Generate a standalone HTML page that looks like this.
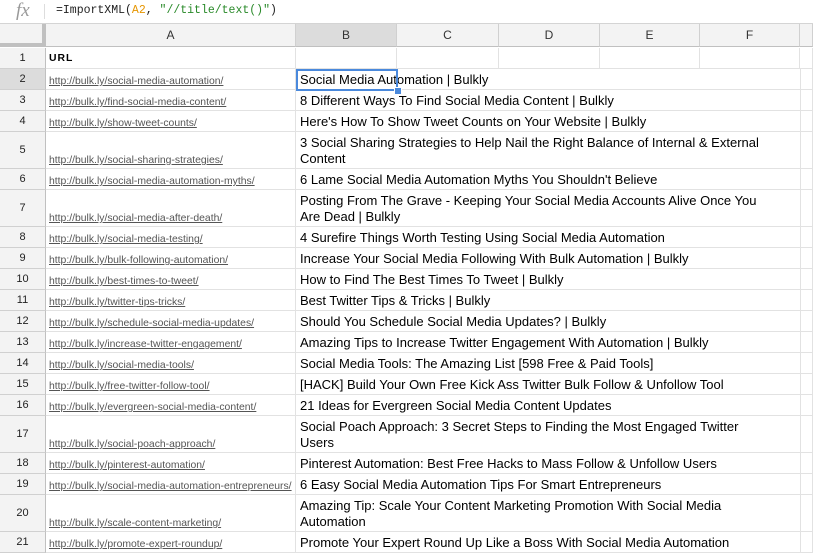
<!DOCTYPE html>
<html><head><style>
body{margin:0;width:813px;height:559px;overflow:hidden;background:#fff;font-family:"Liberation Sans",Arial,sans-serif;position:relative}
.fb{position:absolute;left:0;top:0;width:813px;height:23px;border-bottom:1px solid #d4d4d4;background:#fff}
.fx{position:absolute;left:16px;top:0px;font-family:"Liberation Serif",serif;font-style:italic;color:#999;font-size:19px}
.sep{position:absolute;left:44px;top:4px;width:1px;height:15px;background:#ddd}
.formula{position:absolute;left:56px;top:4px;font-family:"Liberation Mono",monospace;font-size:11.5px;color:#222}
.hdr{position:absolute;top:24px;height:23px;background:#f3f3f3;border-right:1px solid #d0d0d0;border-bottom:1px solid #c0c0c0;box-sizing:border-box;font-size:12px;color:#333;text-align:center;line-height:23px}
.rh{position:absolute;left:0;width:46px;background:#f3f3f3;border-right:1px solid #c0c0c0;border-bottom:1px solid #d0d0d0;box-sizing:border-box;font-size:11px;color:#222;text-align:center;display:flex;align-items:center;justify-content:center}
.c{position:absolute;border-right:1px solid #e2e2e2;border-bottom:1px solid #e2e2e2;box-sizing:border-box;overflow:visible;white-space:nowrap}
.a{left:46px;width:250px;font-size:10.4px;color:#555;text-decoration:underline;display:flex;align-items:flex-end;padding:0 0 2px 3px}
.b{left:296px;width:505px;font-size:13px;color:#000;padding:3px 30px 0 4px;line-height:16px;white-space:normal}
.g{position:absolute;border-right:1px solid #e2e2e2;border-bottom:1px solid #e2e2e2;box-sizing:border-box}
</style></head><body>
<div class="fb"><span class="fx">fx</span><div class="sep"></div><div class="formula">=ImportXML(<span style="color:#e69500">A2</span>, <span style="color:#2a8a2a">"//title/text()"</span>)</div></div>
<div class="hdr" style="left:0;width:46px;border-right:4px solid #c0c0c0;border-bottom:4px solid #c0c0c0;background:#f3f3f3"></div>
<div class="hdr" style="left:46px;width:250px">A</div>
<div class="hdr" style="left:296px;width:101px;background:#dcdcdc">B</div>
<div class="hdr" style="left:397px;width:102px">C</div>
<div class="hdr" style="left:499px;width:101px">D</div>
<div class="hdr" style="left:600px;width:100px">E</div>
<div class="hdr" style="left:700px;width:100px">F</div>
<div class="hdr" style="left:800px;width:13px"></div>
<div id="rows"></div>
<script>
var d=[["URL",""],
["http://bulk.ly/social-media-automation/","Social Media Automation | Bulkly"],
["http://bulk.ly/find-social-media-content/","8 Different Ways To Find Social Media Content | Bulkly"],
["http://bulk.ly/show-tweet-counts/","Here's How To Show Tweet Counts on Your Website | Bulkly"],
["http://bulk.ly/social-sharing-strategies/","3 Social Sharing Strategies to Help Nail the Right Balance of Internal &amp; External Content",1],
["http://bulk.ly/social-media-automation-myths/","6 Lame Social Media Automation Myths You Shouldn't Believe"],
["http://bulk.ly/social-media-after-death/","Posting From The Grave - Keeping Your Social Media Accounts Alive Once You Are Dead | Bulkly",1],
["http://bulk.ly/social-media-testing/","4 Surefire Things Worth Testing Using Social Media Automation"],
["http://bulk.ly/bulk-following-automation/","Increase Your Social Media Following With Bulk Automation | Bulkly"],
["http://bulk.ly/best-times-to-tweet/","How to Find The Best Times To Tweet | Bulkly"],
["http://bulk.ly/twitter-tips-tricks/","Best Twitter Tips &amp; Tricks | Bulkly"],
["http://bulk.ly/schedule-social-media-updates/","Should You Schedule Social Media Updates? | Bulkly"],
["http://bulk.ly/increase-twitter-engagement/","Amazing Tips to Increase Twitter Engagement With Automation | Bulkly"],
["http://bulk.ly/social-media-tools/","Social Media Tools: The Amazing List [598 Free &amp; Paid Tools]"],
["http://bulk.ly/free-twitter-follow-tool/","[HACK] Build Your Own Free Kick Ass Twitter Bulk Follow &amp; Unfollow Tool"],
["http://bulk.ly/evergreen-social-media-content/","21 Ideas for Evergreen Social Media Content Updates"],
["http://bulk.ly/social-poach-approach/","Social Poach Approach: 3 Secret Steps to Finding the Most Engaged Twitter Users",1],
["http://bulk.ly/pinterest-automation/","Pinterest Automation: Best Free Hacks to Mass Follow &amp; Unfollow Users"],
["http://bulk.ly/social-media-automation-entrepreneurs/","6 Easy Social Media Automation Tips For Smart Entrepreneurs"],
["http://bulk.ly/scale-content-marketing/","Amazing Tip: Scale Your Content Marketing Promotion With Social Media Automation",1],
["http://bulk.ly/promote-expert-roundup/","Promote Your Expert Round Up Like a Boss With Social Media Automation"]];
var h="",y=48;
d.forEach(function(r,i){var ht=r[2]?37:21;
h+='<div class="rh" style="top:'+y+'px;height:'+ht+'px;'+(i==1?'background:#dcdcdc':'')+'">'+(i+1)+'</div>';
if(i==0)h+='<div class="c a" style="top:'+y+'px;height:'+ht+'px;text-decoration:none;color:#000;font-weight:bold;letter-spacing:1px;align-items:center;padding:0 0 0 3px">URL</div>';
else h+='<div class="c a" style="top:'+y+'px;height:'+ht+'px">'+r[0]+'</div>';
[[296,101],[397,102],[499,101],[600,100],[700,100],[800,13]].forEach(function(g){h+='<div class="g" style="left:'+g[0]+'px;width:'+g[1]+'px;top:'+y+'px;height:'+ht+'px"></div>'});
if(r[1])h+='<div class="c b" style="top:'+y+'px;height:'+ht+'px;background:#fff;border-right:1px solid #e2e2e2">'+r[1]+'</div>';
y+=ht;});
h+='<div style="position:absolute;left:296px;top:69px;width:102px;height:22px;border:2px solid #4a89dc;box-sizing:border-box"></div><div style="position:absolute;left:394px;top:87px;width:6px;height:6px;background:#4a89dc;border:1px solid #fff"></div>';
document.getElementById("rows").innerHTML=h;
</script>
</body></html>
